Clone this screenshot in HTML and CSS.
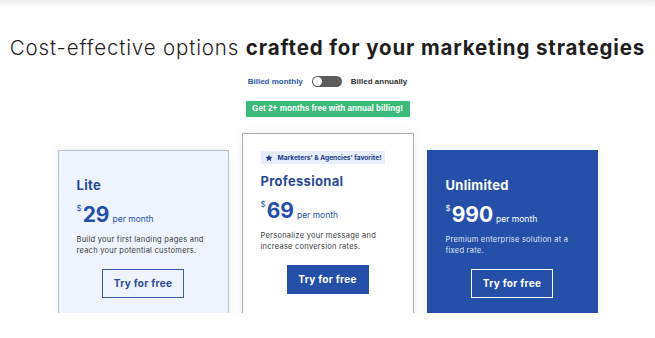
FILE: index.html
```html
<!DOCTYPE html>
<html lang="en">
<head>
    <meta charset="UTF-8">
    <meta name="viewport" content="width=device-width, initial-scale=1.0">
    <title>Pricing</title>
    <link rel="stylesheet" href="styles.css">
</head>
<body>
    <div class="top-band"></div>
    <h1 class="headline">Cost-effective options <strong>crafted for your marketing strategies</strong></h1>

    <div class="billing">
        <span class="billing-label active">Billed monthly</span>
        <span class="switch"><span class="knob"></span></span>
        <span class="billing-label">Billed annually</span>
    </div>
    <div class="promo">Get 2+ months free with annual billing!</div>

    <div class="plans">
        <div class="card card-lite">
            <h2 class="plan-name">Lite</h2>
            <div class="price"><span class="currency">$</span><span class="amount">29</span><span class="period">per month</span></div>
            <p class="desc">Build your first landing pages and reach your potential customers.</p>
            <a class="btn btn-outline" href="#">Try for free</a>
        </div>
        <div class="card card-pro">
            <div class="fav">
                <svg width="8" height="8" viewBox="0 0 24 24"><path d="M12 1.5l3.1 6.9 7.4.7-5.6 5 1.7 7.4L12 17.6l-6.6 3.9 1.7-7.4-5.6-5 7.4-.7z" fill="#23408e"/></svg>
                Marketers' &amp; Agencies' favorite!
            </div>
            <h2 class="plan-name">Professional</h2>
            <div class="price"><span class="currency">$</span><span class="amount">69</span><span class="period">per month</span></div>
            <p class="desc">Personalize your message and increase conversion rates.</p>
            <a class="btn btn-solid" href="#">Try for free</a>
        </div>
        <div class="card card-unlimited">
            <h2 class="plan-name">Unlimited</h2>
            <div class="price"><span class="currency">$</span><span class="amount">990</span><span class="period">per month</span></div>
            <p class="desc">Premium enterprise solution at a fixed rate.</p>
            <a class="btn btn-light" href="#">Try for free</a>
        </div>
    </div>
</body>
</html>
```

FILE: styles.css
```css
body {
    margin: 0;
    background: #fff;
    font-family: 'Inter', 'Noto Sans', sans-serif;
    color: #222;
}
.top-band {
    height: 8px;
    background: linear-gradient(#ececec, #fff);
}
.headline {
    margin: 28px 0 0;
    font-size: 20.5px;
    line-height: 23px;
    font-weight: 300;
    text-align: center;
    color: #1f1f1f;
    letter-spacing: 0.85px;
}
.headline strong {
    font-weight: 700;
}
.billing {
    display: flex;
    justify-content: center;
    align-items: center;
    gap: 9px;
    margin-top: 16px;
    height: 12px;
    font-family: 'Liberation Sans', Arial, sans-serif;
    font-size: 8px;
    font-weight: 700;
    color: #333;
}
.billing-label.active {
    color: #2d55a8;
}
.switch {
    width: 30px;
    height: 11px;
    border-radius: 6px;
    background: #5c5c5c;
    position: relative;
}
.knob {
    position: absolute;
    left: 1px;
    top: 1px;
    width: 9px;
    height: 9px;
    border-radius: 50%;
    background: #fff;
}
.promo {
    width: 164px;
    height: 16px;
    margin: 14px auto 0;
    background: #3dba7b;
    color: #fff;
    font-family: 'Liberation Sans', Arial, sans-serif;
    font-size: 8.2px;
    font-weight: 700;
    line-height: 16px;
    text-align: center;
}
.plans {
    display: flex;
    justify-content: center;
    align-items: flex-start;
    gap: 13px;
    margin-top: 6px;
    padding-top: 10px;
    height: 180px;
    overflow: hidden;
}
.card {
    width: 171px;
    height: 220px;
    box-sizing: border-box;
    padding: 26px 18px 0;
    border: 1px solid #b9bfca;
    box-shadow: 0 0 10px rgba(0, 0, 0, 0.07);
    color: #2a4a98;
}
.card-lite {
    margin-top: 17px;
    background: #eef3fd;
}
.card-pro {
    width: 172px;
    padding-top: 17px;
    background: #fff;
    border-color: #adadad;
}
.card-unlimited {
    margin-top: 17px;
    background: #2450a9;
    border-color: #2450a9;
    color: #fff;
}
.fav {
    display: flex;
    align-items: center;
    gap: 5px;
    width: fit-content;
    height: 13px;
    padding: 0 4px;
    margin-bottom: 9px;
    background: #e7edfa;
    color: #23408e;
    font-size: 6.6px;
    font-weight: 700;
}
.plan-name {
    margin: 0;
    font-size: 13px;
    line-height: 17px;
    font-weight: 700;
    letter-spacing: 0.3px;
}
.price {
    display: flex;
    align-items: baseline;
    margin-top: 9px;
    height: 24px;
    color: #2450a9;
}
.card-unlimited .price {
    color: #fff;
}
.currency {
    align-self: flex-start;
    font-size: 8px;
    margin-right: 1px;
}
.amount {
    font-size: 21px;
    line-height: 24px;
    font-weight: 700;
}
.period {
    font-size: 8.5px;
    margin-left: 3px;
}
.desc {
    margin: 8px 0 0;
    font-size: 7.5px;
    line-height: 10.5px;
    letter-spacing: 0.25px;
    color: #3a3a3a;
}
.card-unlimited .desc {
    color: #dfe6f6;
}
.btn {
    display: block;
    width: 82px;
    height: 29px;
    box-sizing: border-box;
    margin: 13px auto 0;
    font-size: 10px;
    font-weight: 700;
    line-height: 27px;
    text-align: center;
    text-decoration: none;
    letter-spacing: 0.3px;
}
.btn-outline {
    border: 1.5px solid #3d59a8;
    color: #2a4a98;
}
.btn-solid {
    background: #2450a9;
    border: 1px solid #2450a9;
    color: #fff;
}
.btn-light {
    border: 1.5px solid #fff;
    color: #fff;
}
```
